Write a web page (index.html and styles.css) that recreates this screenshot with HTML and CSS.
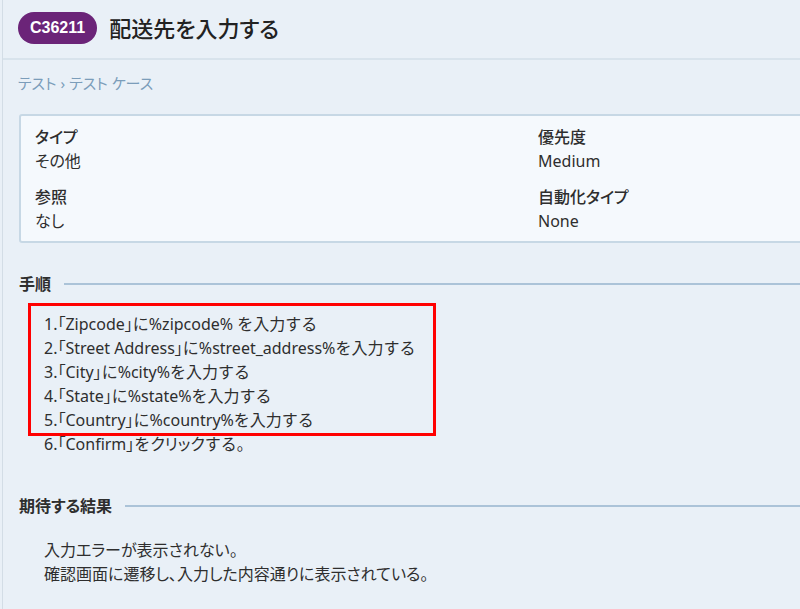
FILE: index.html
```html
<!DOCTYPE html>
<html lang="ja">

<head>
    <meta charset="UTF-8">
    <meta name="viewport" content="width=device-width, initial-scale=1.0">
    <title>C36211 配送先を入力する</title>
    <link rel="stylesheet" href="styles.css">
</head>

<body>
    <div class="page">
        <div class="case-header">
            <span class="case-id">C36211</span>
            <h1 class="case-title">配送先を入力する</h1>
        </div>

        <div class="breadcrumb">
            <a href="#">テスト</a> › <a href="#">テスト ケース</a>
        </div>

        <div class="info-box">
            <div class="field">
                <div class="field-label">タイプ</div>
                <div class="field-value">その他</div>
            </div>
            <div class="field">
                <div class="field-label">優先度</div>
                <div class="field-value">Medium</div>
            </div>
            <div class="field">
                <div class="field-label">参照</div>
                <div class="field-value">なし</div>
            </div>
            <div class="field">
                <div class="field-label">自動化タイプ</div>
                <div class="field-value">None</div>
            </div>
        </div>

        <div class="section">
            <div class="section-title"><span>手順</span></div>
            <div class="steps">
                <!-- highlight around steps 1-5 -->
                <div class="highlight"></div>
                <div>1.<span class="ui-name">「Zipcode」</span>に%zipcode% を入力する</div>
                <div>2.<span class="ui-name">「Street Address」</span>に%street_address%を入力する</div>
                <div>3.<span class="ui-name">「City」</span>に%city%を入力する</div>
                <div>4.<span class="ui-name">「State」</span>に%state%を入力する</div>
                <div>5.<span class="ui-name">「Country」</span>に%country%を入力する</div>
                <div>6.<span class="ui-name">「Confirm」</span>を<span class="ui-name">クリック</span>する。</div>
            </div>
        </div>

        <div class="section section-results">
            <div class="section-title"><span>期待する結果</span></div>
            <div class="results">
                <div>入力エラーが表示されない。</div>
                <div>確認画面に遷移し、入力した内容通りに表示されている。</div>
            </div>
        </div>
    </div>
</body>

</html>
```

FILE: styles.css
```css
/* Global Styles */
* {
    margin: 0;
    padding: 0;
    box-sizing: border-box;
}

body {
    background-color: #e9f0f7;
    color: #2e2e2e;
    font-family: 'Noto Sans', 'Noto Sans CJK JP', sans-serif;
    font-size: 16px;
    line-height: 24px;
    font-feature-settings: "palt";
    overflow: hidden;
}

.page {
    margin-left: 2px;
    border-left: 1px solid #d3dde6;
    min-height: 609px;
}

/* Header */
.case-header {
    display: flex;
    align-items: center;
    gap: 12px;
    height: 60px;
    padding: 0 15px 2px;
    border-bottom: 2px solid #d8e3ec;
}

.case-id {
    display: inline-block;
    background-color: #6b2478;
    color: #fff;
    font-family: 'Liberation Sans', Arial, sans-serif;
    font-weight: bold;
    font-size: 16px;
    line-height: 32px;
    padding: 0 12px;
    border-radius: 16px;
}

.case-title {
    font-size: 22px;
    font-weight: 500;
    color: #222;
}

.breadcrumb {
    padding: 11px 15px 0;
    height: 54px;
    font-size: 15px;
    color: #7b9dba;
}

.breadcrumb a {
    color: #7b9dba;
    text-decoration: none;
}

/* Info Box */
.info-box {
    display: grid;
    grid-template-columns: 503px 1fr;
    row-gap: 12px;
    margin: 0 -20px 0 16px;
    padding: 9px 14px 8px;
    background-color: #f5f9fd;
    border: 2px solid #c7d8e5;
    border-radius: 3px;
}

.field-label {
    font-weight: 500;
}

/* Sections */
.section {
    padding: 0 0 0 16px;
}

.section-title {
    display: flex;
    align-items: center;
    gap: 13px;
    margin-top: 29px;
    font-size: 16px;
    font-weight: bold;
}

.section-title::after {
    content: '';
    flex: 1;
    height: 2px;
    background-color: #abc3d8;
}

.section-results .section-title {
    margin-top: 38px;
}

.steps {
    position: relative;
    padding: 16px 0 0 25px;
    font-feature-settings: normal;
}

.steps .ui-name {
    font-feature-settings: "palt";
}

.highlight {
    position: absolute;
    left: 9px;
    top: 7px;
    width: 408px;
    height: 133px;
    border: 3px solid #ff0000;
}

.results {
    padding: 20px 0 0 25px;
}
```
